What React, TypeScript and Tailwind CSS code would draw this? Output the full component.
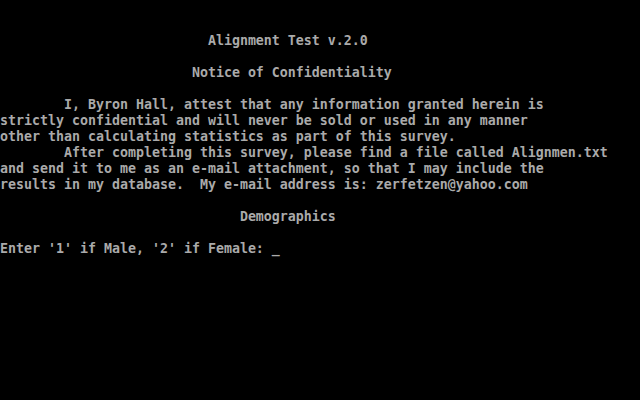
const lines: string[] = [
  '',
  '',
  '                          Alignment Test v.2.0',
  '',
  '                        Notice of Confidentiality',
  '',
  '        I, Byron Hall, attest that any information granted herein is',
  'strictly confidential and will never be sold or used in any manner',
  'other than calculating statistics as part of this survey.',
  '        After completing this survey, please find a file called Alignmen.txt',
  'and send it to me as an e-mail attachment, so that I may include the',
  'results in my database.  My e-mail address is: zerfetzen@yahoo.com',
  '',
  '                              Demographics',
  '',
  "Enter '1' if Male, '2' if Female: _",
]

export default function App() {
  return (
    <div className="w-[640px] h-[400px] bg-black overflow-hidden pt-[1px]">
      <div className="font-['DejaVu_Sans_Mono',monospace] font-bold text-[13.29px] leading-[16px] text-[#aaaaaa] whitespace-pre">
        {lines.map((line, i) => (
          <div key={i} className="h-[16px]">
            {line}
          </div>
        ))}
      </div>
    </div>
  )
}
